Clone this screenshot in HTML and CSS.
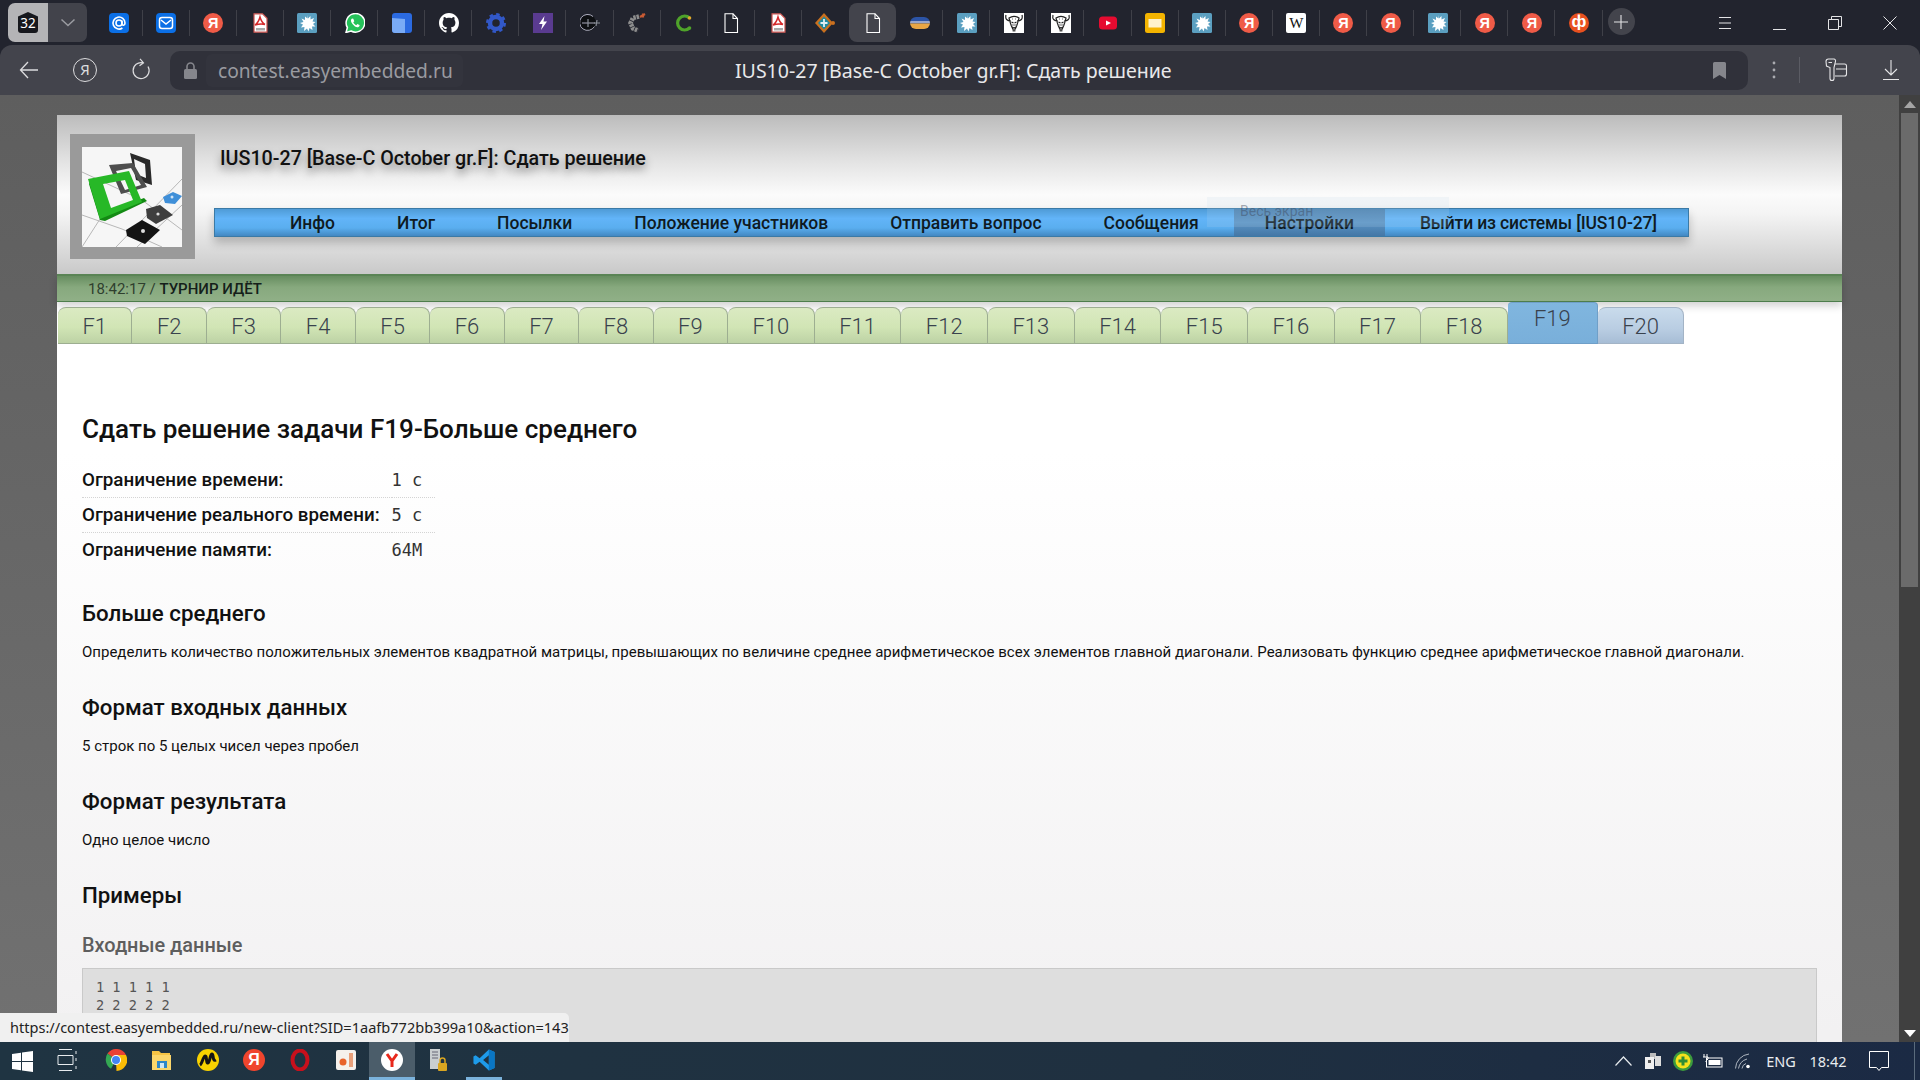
FILE: index.html
```html
<!DOCTYPE html>
<html lang="ru">
<head>
<meta charset="utf-8">
<title>IUS10-27 [Base-C October gr.F]: Сдать решение</title>
<link rel="stylesheet" href="styles.css">
</head>
<body>
<svg class="defs" aria-hidden="true">
  <defs>
    <clipPath id="oval"><rect x="0" y="4" width="20" height="12" rx="6"/></clipPath>
  </defs>
  <symbol id="i-at" viewBox="0 0 20 20"><rect width="20" height="20" rx="4" fill="#0b6fe6"/><circle cx="10" cy="10" r="3" fill="none" stroke="#fff" stroke-width="1.6"/><path d="M13 7.500v3.400c0 2 3 2 3 -.9a6 6 0 1 0-2.600 5" fill="none" stroke="#fff" stroke-width="1.6"/></symbol>
  <symbol id="i-mail" viewBox="0 0 20 20"><rect width="20" height="20" rx="4" fill="#0b6fe6"/><rect x="3.500" y="4.500" width="13" height="11" rx="2.500" fill="none" stroke="#fff" stroke-width="1.500"/><path d="M5 7l5 4 5-4" fill="none" stroke="#fff" stroke-width="1.500"/></symbol>
  <symbol id="i-pdf" viewBox="0 0 20 20"><path d="M4 .8h8.500L17 5.300v13.900H4z" fill="#fff" stroke="#c8524e" stroke-width="1.200"/><path d="M10 4c-.8 3-2 6-5 8 3-1 7-1.500 10-.5-3-1.500-4-4-5-7.500z" fill="none" stroke="#d5282a" stroke-width="1.500"/><rect x="6" y="15" width="9" height="2.500" fill="#a9a9a9"/></symbol>
  <symbol id="i-splat" viewBox="0 0 20 20"><rect width="20" height="20" rx="1.500" fill="#5b9fc0"/><path d="M10 2l1 3.500 2.500-2.500 0 3.500 3.500-1.500-1.500 3.500 3 .5-2.500 2 2.500 2.500-3.500 0 .5 3.500-3-2-1 3.500-1.500-3-3 2.500.5-4-3.500 .5 2-3-3-1.500 3.500-1-2-3.500 3.500 1.500 0-3.500 2.500 2z" fill="#fff"/></symbol>
  <symbol id="i-wa" viewBox="0 0 20 20"><path d="M1 19.500l1.400-5A9.300 9.300 0 1 1 6 18z" fill="#25c25a" stroke="#fff" stroke-width="1.500"/><path d="M7 5.500c-1.500 1-1.500 3 .5 5.500s4.500 4 6 3c1-.5 1.200-1.500 1-2l-2.200-1-1 1.200c-1.300-.5-2.500-1.700-3-3l1-1-1-2.500z" fill="#fff"/></symbol>
  <symbol id="i-cube" viewBox="0 0 20 20"><path d="M3 0h14a3 3 0 0 1 3 3v14a3 3 0 0 1-3 3H3a3 3 0 0 1-3-3V3a3 3 0 0 1 3-3z" fill="#2b6ae0"/><path d="M0 5l13 1v14H3a3 3 0 0 1-3-3z" fill="#7aabf5"/></symbol>
  <symbol id="i-gh" viewBox="0 0 16 16"><path fill="#fff" d="M8 0C3.580 0 0 3.580 0 8c0 3.540 2.290 6.530 5.470 7.590.4.070.55-.17.55-.38 0-.19-.01-.82-.01-1.490-2.010.37-2.530-.49-2.690-.94-.09-.23-.48-.94-.82-1.130-.28-.15-.68-.52-.01-.53.63-.01 1.080.58 1.230.82.72 1.210 1.870.87 2.330.66.07-.52.28-.87.51-1.070-1.780-.2-3.640-.89-3.640-3.950 0-.87.31-1.590.82-2.150-.08-.2-.36-1.020.08-2.120 0 0 .67-.21 2.200.82.64-.18 1.320-.27 2-.27.68 0 1.360.09 2 .27 1.530-1.040 2.200-.82 2.200-.82.44 1.100.16 1.920.08 2.120.51.56.82 1.270.82 2.150 0 3.070-1.870 3.750-3.650 3.950.29.25.54.73.54 1.480 0 1.070-.01 1.930-.01 2.200 0 .21.15.46.55.38A8.013 8.013 0 0016 8c0-4.420-3.580-8-8-8z"/></symbol>
  <symbol id="i-gear" viewBox="0 0 20 20"><circle cx="10" cy="10" r="6" fill="none" stroke="#3258c8" stroke-width="4.500"/><circle cx="10" cy="10" r="8.800" fill="none" stroke="#3258c8" stroke-width="2.400" stroke-dasharray="3.500 3.400"/></symbol>
  <symbol id="i-bolt" viewBox="0 0 20 20"><rect width="20" height="20" fill="#5a3b90"/><path d="M11.500 3L6 11h3.500L8 17l6-8.500h-3.500z" fill="#fff"/></symbol>
  <symbol id="i-cpp" viewBox="0 0 20 20"><circle cx="8" cy="10" r="8" fill="#0d0f12"/><path d="M13 3.500a8 8 0 1 0 1.500 10M2 10h13" fill="none" stroke="#aab" stroke-width="1"/><path d="M8 6v8M14 10h6M17 7l-1 6" fill="none" stroke="#8a8f98" stroke-width="1.200"/></symbol>
  <symbol id="i-gc" viewBox="0 0 20 20"><path d="M12 3.500L6 5 3.500 10l2.500 5.500 5 2" fill="none" stroke="#8d8d8d" stroke-width="4.500" stroke-dasharray="2.500 .8"/><path d="M13 4l5-3M16 .5v4" stroke="#c85a33" stroke-width="2.200"/></symbol>
  <symbol id="i-cg" viewBox="0 0 20 20"><path d="M15.500 5A7 7 0 1 0 15.500 15" fill="none" stroke="#4fa32a" stroke-width="3.200"/><circle cx="15.500" cy="5" r="1.800" fill="#e1a92a"/><circle cx="15.500" cy="15" r="1.800" fill="#4fa32a"/></symbol>
  <symbol id="i-doc" viewBox="0 0 20 20"><path d="M4 .8h8L16.500 5.500v14H4z" fill="#23252e" stroke="#fff" stroke-width="1.100"/><path d="M12 .8v4.700h4.500" fill="none" stroke="#fff" stroke-width="1.100"/></symbol>
  <symbol id="i-doca" viewBox="0 0 20 20"><path d="M4 .8h8L16.500 5.500v14H4z" fill="#43444c" stroke="#fff" stroke-width="1.100"/><path d="M12 .8v4.700h4.500" fill="none" stroke="#fff" stroke-width="1.100"/></symbol>
  <symbol id="i-dia" viewBox="0 0 20 20"><path d="M9 0l9 10-9 10-9-10z" fill="#c9701f"/><path d="M9 3.500l6 6.500-6 6.500L3 10z" fill="#1f8aa0"/><path d="M9 6v8M5.500 10h7" stroke="#dfeff2" stroke-width="1.800"/><circle cx="18" cy="10" r="2" fill="#c9701f"/></symbol>
  <symbol id="i-oval" viewBox="0 0 20 20"><g clip-path="url(#oval)"><rect y="4" width="20" height="4" fill="#2c54a6"/><rect y="8" width="20" height="2.500" fill="#98a6cc"/><rect y="10.500" width="20" height="5.500" fill="#e8a645"/></g></symbol>
  <symbol id="i-gnu" viewBox="0 0 20 20"><rect width="20" height="20" fill="#fff"/><path d="M2 2c-1 4 1 6 5 6M18 2c1 4-1 6-5 6M5 5c1 4 2 9 5 13 3-4 4-9 5-13-3-2-7-2-10 0zM7.500 9l2 1M12.500 9l-2 1M8 14l2 1 2-1" fill="none" stroke="#222" stroke-width="1.200"/><path d="M8 6h1M11 6h1M7 12h6M9 16.500v2M11 16.500v2" stroke="#666" stroke-width="1"/></symbol>
  <symbol id="i-yt" viewBox="0 0 20 20"><rect x="1" y="3.500" width="18" height="13" rx="3.500" fill="#e60b30"/><path d="M8 7.500l5 2.500-5 2.500z" fill="#fff"/></symbol>
  <symbol id="i-slides" viewBox="0 0 20 20"><rect width="20" height="20" rx="2.500" fill="#f4b400"/><rect x="3.500" y="6" width="13" height="8.500" fill="#fff2cc"/></symbol>
</svg>

<header class="tabstrip">
  <div class="counter">
    <div class="counter-num"><div class="shield">32</div></div>
    <div class="counter-more"><svg width="16" height="10" viewBox="0 0 16 10"><path d="M1.500 1.500L8 7.500l6.500-6" fill="none" stroke="#9a9ba1" stroke-width="1.500"/></svg></div>
  </div>
  <div class="tabs">
    <div class="tab"><svg class="fav"><use href="#i-at"/></svg></div>
    <div class="tab"><svg class="fav"><use href="#i-mail"/></svg></div>
    <div class="tab"><span class="fav-ya">Я</span></div>
    <div class="tab"><svg class="fav"><use href="#i-pdf"/></svg></div>
    <div class="tab"><svg class="fav"><use href="#i-splat"/></svg></div>
    <div class="tab"><svg class="fav"><use href="#i-wa"/></svg></div>
    <div class="tab"><svg class="fav"><use href="#i-cube"/></svg></div>
    <div class="tab"><svg class="fav"><use href="#i-gh"/></svg></div>
    <div class="tab"><svg class="fav"><use href="#i-gear"/></svg></div>
    <div class="tab"><svg class="fav"><use href="#i-bolt"/></svg></div>
    <div class="tab"><svg class="fav"><use href="#i-cpp"/></svg></div>
    <div class="tab"><svg class="fav"><use href="#i-gc"/></svg></div>
    <div class="tab"><svg class="fav"><use href="#i-cg"/></svg></div>
    <div class="tab"><svg class="fav"><use href="#i-doc"/></svg></div>
    <div class="tab"><svg class="fav"><use href="#i-pdf"/></svg></div>
    <div class="tab nosep"><svg class="fav"><use href="#i-dia"/></svg></div>
    <div class="tab active"><svg class="fav"><use href="#i-doca"/></svg></div>
    <div class="tab"><svg class="fav"><use href="#i-oval"/></svg></div>
    <div class="tab"><svg class="fav"><use href="#i-splat"/></svg></div>
    <div class="tab"><svg class="fav"><use href="#i-gnu"/></svg></div>
    <div class="tab"><svg class="fav"><use href="#i-gnu"/></svg></div>
    <div class="tab"><svg class="fav"><use href="#i-yt"/></svg></div>
    <div class="tab"><svg class="fav"><use href="#i-slides"/></svg></div>
    <div class="tab"><svg class="fav"><use href="#i-splat"/></svg></div>
    <div class="tab"><span class="fav-ya">Я</span></div>
    <div class="tab"><span class="fav-w">W</span></div>
    <div class="tab"><span class="fav-ya">Я</span></div>
    <div class="tab"><span class="fav-ya">Я</span></div>
    <div class="tab"><svg class="fav"><use href="#i-splat"/></svg></div>
    <div class="tab"><span class="fav-ya">Я</span></div>
    <div class="tab"><span class="fav-ya">Я</span></div>
    <div class="tab"><span class="fav-f">ф</span></div>
  </div>
  <div class="newtab"><svg width="14" height="14" viewBox="0 0 14 14"><path d="M7 0v14M0 7h14" stroke="#e4e4e6" stroke-width="1.100"/></svg></div>
  <div class="wincontrols">
    <div class="winbtn"><svg width="14" height="14" viewBox="0 0 14 14"><path d="M1 1.500h12M1 7h12M1 12.500h12" stroke="#e4e4e6" stroke-width="1"/></svg></div>
    <div class="winbtn"><svg width="14" height="14" viewBox="0 0 14 14"><path d="M0 13.500h13" stroke="#e4e4e6" stroke-width="1"/></svg></div>
    <div class="winbtn"><svg width="14" height="14" viewBox="0 0 14 14"><path d="M3.500 3.500V.5h10v10h-3M.5 3.500h10v10H.5z" fill="none" stroke="#e4e4e6" stroke-width="1"/></svg></div>
    <div class="winbtn"><svg width="14" height="14" viewBox="0 0 14 14"><path d="M.5.500l13 13M13.500.5l-13 13" stroke="#e4e4e6" stroke-width="1"/></svg></div>
  </div>
</header>

<nav class="toolbar">
  <div class="tool"><svg width="20" height="18" viewBox="0 0 20 18"><path d="M19 9H1.500M9 1L1.500 9 9 17" fill="none" stroke="#dcdcde" stroke-width="1.300"/></svg></div>
  <div class="tool"><span class="ya-round">Я</span></div>
  <div class="tool"><svg width="20" height="24" viewBox="0 0 20 24"><path d="M12 4.800A8 8 0 1 0 17 8.500M9 .8l3.500 4-4 3" fill="none" stroke="#dcdcde" stroke-width="1.200"/></svg></div>
  <div class="urlbar">
    <div class="lock"><svg width="13" height="17" viewBox="0 0 13 17"><path d="M3 7V4.500a3.500 3.500 0 0 1 7 0V7" fill="none" stroke="#85868c" stroke-width="1.600"/><rect y="7" width="13" height="10" rx="1.500" fill="#85868c"/></svg></div>
    <div class="domain">contest.easyembedded.ru</div>
    <div class="pagetitle">IUS10-27 [Base-C October gr.F]: Сдать решение</div>
    <div class="bookmark"><svg width="13" height="17" viewBox="0 0 13 17"><path d="M0 1.500A1.500 1.500 0 0 1 1.500 0h10A1.500 1.500 0 0 1 13 1.500V17l-6.500-4L0 17z" fill="#85868c"/></svg></div>
  </div>
  <div class="toolright">
    <div class="dots"><svg width="4" height="18" viewBox="0 0 4 18"><circle cx="2" cy="2" r="1.400" fill="#aaabb0"/><circle cx="2" cy="9" r="1.400" fill="#aaabb0"/><circle cx="2" cy="16" r="1.400" fill="#aaabb0"/></svg></div>
    <div class="toolsep"></div>
    <div class="tool wide first"><svg width="24" height="24" viewBox="0 0 24 24"><path d="M2 3.500C2 2 3 1 4.500 1H10c1 0 1.800 1 1.500 2.500l-1.500 6v11c0 1-1 2-2 2s-2-1-2-2v-11L2.500 8z" fill="none" stroke="#e6e6e8" stroke-width="1.100"/><path d="M11 6h9.500a2 2 0 0 1 2 2v8a2 2 0 0 1-2 2H11M12 11h10M4.500 4.500h3.500" fill="none" stroke="#e6e6e8" stroke-width="1.100"/></svg></div>
    <div class="tool wide"><svg width="16" height="20" viewBox="0 0 16 20"><path d="M8 0v15M2 9l6 6 6-6M0 19.500h16" fill="none" stroke="#e6e6e8" stroke-width="1.100"/></svg></div>
  </div>
</nav>

<main class="viewport">
  <div class="gutter">
    <article class="page">
      <section class="sitehead">
        <div class="logo">
          <svg class="logo-img" viewBox="0 0 100 100">
            <rect width="100" height="100" fill="#f6f6f6"/>
            <path d="M0 25l60 28 40 30M100 32L34 100M0 68l40 14 40 18M55 100L100 58M18 72L0 100" fill="none" stroke="#b7b7b7" stroke-width="1"/>
            <path d="M48 6l20 7 2 25-16-5z M52 12l2 15 10 4-1-14z" fill="#2a2a2a" fill-rule="evenodd"/>
            <path d="M27 18l24-2 14 24-26 7z M34 24l9 19 16-5-10-17z" fill="#4e4e4e" fill-rule="evenodd"/>
            <path d="M7 37l11 36 5 1 42-20-3-3-37 14-16-33z" fill="#138a13"/>
            <path d="M6 32l41-8 13 31-42 17z M21 37l8 24 22-8-8-20z" fill="#27b827" fill-rule="evenodd"/>
            <path d="M81 50l10-5 9 4-7 8-10-1z" fill="#3f8fd8"/>
            <circle cx="90" cy="50" r="1.500" fill="#cfe3f5"/>
            <path d="M64 62l14-4 13 10-17 9-9-6z" fill="#3e3e3e"/>
            <circle cx="76" cy="67" r="1.600" fill="#ddd"/>
            <path d="M44 83l16-10 18 10-15 14-18-8z" fill="#141414"/>
            <circle cx="61" cy="84" r="2" fill="#ddd"/>
          </svg>
        </div>
        <div class="headmain">
          <div class="sitetitle">IUS10-27 [Base-C October gr.F]: Сдать решение</div>
          <div class="menu">
            <a class="menuitem">Инфо</a>
            <a class="menuitem">Итог</a>
            <a class="menuitem">Посылки</a>
            <a class="menuitem">Положение участников</a>
            <a class="menuitem">Отправить вопрос</a>
            <a class="menuitem">Сообщения</a>
            <a class="menuitem current">Настройки</a>
            <a class="menuitem logout">Выйти из системы [IUS10-27]</a>
          </div>
        </div>
        <div class="ghost">Весь экран</div>
      </section>
      <div class="statusbar">18:42:17 / <b>ТУРНИР ИДЁТ</b></div>
      <div class="probtabs">
        <a class="ptab">F1</a><a class="ptab">F2</a><a class="ptab">F3</a><a class="ptab">F4</a><a class="ptab">F5</a><a class="ptab">F6</a><a class="ptab">F7</a><a class="ptab">F8</a><a class="ptab">F9</a><a class="ptab">F10</a><a class="ptab">F11</a><a class="ptab">F12</a><a class="ptab">F13</a><a class="ptab">F14</a><a class="ptab">F15</a><a class="ptab">F16</a><a class="ptab">F17</a><a class="ptab">F18</a><a class="ptab cur">F19</a><a class="ptab next">F20</a>
      </div>
      <div class="content">
        <h1>Сдать решение задачи F19-Больше среднего</h1>
        <table class="limits">
          <tr><th>Ограничение времени:</th><td>1 с</td></tr>
          <tr><th>Ограничение реального времени:</th><td>5 с</td></tr>
          <tr><th>Ограничение памяти:</th><td>64M</td></tr>
        </table>
        <h3>Больше среднего</h3>
        <p>Определить количество положительных элементов квадратной матрицы, превышающих по величине среднее арифметическое всех элементов главной диагонали. Реализовать функцию среднее арифметическое главной диагонали.</p>
        <h3>Формат входных данных</h3>
        <p>5 строк по 5 целых чисел через пробел</p>
        <h3>Формат результата</h3>
        <p>Одно целое число</p>
        <h3>Примеры</h3>
        <h4>Входные данные</h4>
        <pre class="sample">1 1 1 1 1
2 2 2 2 2
3 3 3 3 3
4 4 4 4 4
5 5 5 5 5</pre>
      </div>
    </article>
  </div>
  <div class="scrollbar">
    <div class="sb-btn"><svg width="12" height="7" viewBox="0 0 12 7"><path d="M6 0l6 7H0z" fill="#a5a5a5"/></svg></div>
    <div class="sb-track"><div class="sb-thumb"></div></div>
    <div class="sb-btn"><svg width="12" height="7" viewBox="0 0 12 7"><path d="M6 7L0 0h12z" fill="#fff"/></svg></div>
  </div>
  <div class="linkstatus">https://contest.easyembedded.ru/new-client?SID=1aafb772bb399a10&amp;action=143</div>
</main>

<footer class="taskbar">
  <div class="tb-start"><svg width="21" height="21" viewBox="0 0 21 21"><path d="M0 3l9-1.300V10H0zM10 1.500L21 0v10H10zM0 11h9v8.300L0 18zM10 11h11v10l-11-1.500z" fill="#fff"/></svg></div>
  <div class="tb-item tb-view"><svg width="21" height="22" viewBox="0 0 21 22"><path d="M2 .5h13M2 21.500h13M1 6.500h15v9H1zM19 2v3M19 9v3M19 17v3" fill="none" stroke="#e8ecef" stroke-width="1"/></svg></div>
  <div class="tb-item"><svg width="22" height="22" viewBox="0 0 22 22"><path d="M11 11L2.500 4.500A10.800 10.800 0 0 1 21 6H11z" fill="#e94235"/><path d="M11 11l-5 8.800A11 11 0 0 1 2.500 4.500z" fill="#34a853"/><path d="M11 6h10a11 11 0 0 1-9.500 16L11 11z" fill="#fbbc05"/><circle cx="11" cy="11" r="5" fill="#fff"/><circle cx="11" cy="11" r="4" fill="#4285f4"/></svg></div>
  <div class="tb-item"><svg width="20" height="20" viewBox="0 0 20 20"><path d="M0 1h7l2 2h9v4H0z" fill="#f6c445"/><path d="M0 5h19v15H0z" fill="#fbd66b"/><path d="M5 11h10v7H5z" fill="#2f87c9"/><path d="M8 13h4v5H8z" fill="#cfe6f6"/></svg></div>
  <div class="tb-item"><svg width="22" height="22" viewBox="0 0 22 22"><circle cx="11" cy="11" r="11" fill="#f8d200"/><path d="M3 16c2-1 3-8 5-9s1 8 3 7 2-9 4-9 0 8 4 6" fill="none" stroke="#151515" stroke-width="3"/></svg></div>
  <div class="tb-item"><span class="fav-ya large">Я</span></div>
  <div class="tb-item"><svg width="22" height="22" viewBox="0 0 22 22"><ellipse cx="11" cy="11" rx="7.500" ry="9.500" fill="none" stroke="#c8101c" stroke-width="4"/></svg></div>
  <div class="tb-item"><svg width="20" height="20" viewBox="0 0 20 20"><rect width="20" height="20" rx="2" fill="#f5f1ec"/><circle cx="7" cy="12" r="3.500" fill="#e8632a"/><rect x="13" y="3" width="4" height="14" fill="#e9a07a"/></svg></div>
  <div class="tb-item tb-active"><svg width="22" height="22" viewBox="0 0 22 22"><circle cx="11" cy="11" r="11" fill="#fff"/><path d="M6 5l5 7 5-7M11 12v6" fill="none" stroke="#e8281c" stroke-width="3"/></svg></div>
  <div class="tb-item"><svg width="20" height="24" viewBox="0 0 20 24"><rect x="2" y="1" width="10" height="20" fill="#c9ced0"/><path d="M4 4h6M4 7h6M4 10h6" stroke="#667" stroke-width="1"/><rect x="10" y="15" width="9" height="8" rx="1" fill="#d9a521"/><path d="M12 15v-2.500a2.500 2.500 0 0 1 5 0V15" fill="none" stroke="#d9a521" stroke-width="1.500"/></svg></div>
  <div class="tb-item tb-open"><svg width="22" height="24" viewBox="0 0 100 100"><path d="M72 2l26 12v72L72 98 30 58 12 72 2 66V34l10-6 18 14zM72 28L46 50l26 22z" fill="#1e9bea"/><path d="M72 2l26 12v72L72 98z" fill="#0a76c4"/></svg></div>
  <div class="tray">
    <div class="tray-i"><svg width="17" height="10" viewBox="0 0 17 10"><path d="M.5 9.500L8.500 1l8 8.500" fill="none" stroke="#e8ecef" stroke-width="1.200"/></svg></div>
    <div class="tray-i"><svg width="16" height="16" viewBox="0 0 16 16"><rect x="5" y="0" width="6" height="6" fill="#bbb"/><rect x="10" y="3" width="6" height="10" fill="#ddd"/><rect x="0" y="4" width="9" height="12" fill="#f0f0f0"/><rect x="3" y="7" width="3" height="3" fill="#555"/></svg></div>
    <div class="tray-i"><svg width="20" height="20" viewBox="0 0 20 20"><circle cx="10" cy="10" r="10" fill="#3c9b3e"/><circle cx="10" cy="10" r="7.500" fill="#f5e11c"/><path d="M10 5.500v9M5.500 10h9" stroke="#2f8c35" stroke-width="3"/></svg></div>
    <div class="tray-i"><svg width="20" height="14" viewBox="0 0 20 14"><path d="M1 0v3M4 0v3M0 3h5v2l-2 2v1" fill="none" stroke="#fff" stroke-width="1"/><rect x="3.500" y="4" width="15.500" height="9" fill="none" stroke="#fff" stroke-width="1"/><rect x="5.500" y="6" width="12" height="5" fill="#fff"/></svg></div>
    <div class="tray-i"><svg width="16" height="16" viewBox="0 0 16 16"><path d="M.5 15.500A15 15 0 0 1 14 1M3.500 15.500A12 12 0 0 1 12 6M7 15.500a6 6 0 0 1 4-5" fill="none" stroke="#aeb6c0" stroke-width="1"/><circle cx="13" cy="13.500" r="1.800" fill="#fff"/></svg></div>
    <div class="tray-t lang">ENG</div>
    <div class="tray-t clock">18:42</div>
    <div class="tray-i notif"><svg width="20" height="20" viewBox="0 0 20 20"><path d="M.5.500h19v16h-7l-2.500 3-2.500-3h-7z" fill="none" stroke="#fff" stroke-width="1"/></svg></div>
    <div class="showdesk"></div>
  </div>
</footer>
</body>
</html>
```

FILE: styles.css
```css
* { box-sizing: border-box; }
html, body { margin: 0; height: 100%; }
body {
  display: flex;
  flex-direction: column;
  width: 1920px;
  height: 1080px;
  overflow: hidden;
  background: #22242e;
  font-family: Roboto, "Liberation Sans", sans-serif;
}
.defs { display: block; width: 0; height: 0; flex: none; overflow: hidden; }

/* browser tab strip */
.tabstrip {
  flex: none;
  display: flex;
  align-items: flex-start;
  height: 45px;
  padding: 3px 0 0 8px;
  background: #22242e;
}
.counter { display: flex; width: 79px; height: 39px; border-radius: 7px; overflow: hidden; }
.counter-num { width: 40px; display: flex; align-items: center; justify-content: center; background: #b4b4b6; }
.shield {
  width: 20px;
  height: 21px;
  padding-top: 2px;
  line-height: 19px;
  text-align: center;
  font-family: "Noto Sans", sans-serif;
  font-size: 13.500px;
  color: #fff;
  background: #17181d;
  border-radius: 3px;
  clip-path: polygon(50% 0, 100% 22%, 100% 100%, 0 100%, 0 22%);
}
.counter-more { flex: 1; display: flex; align-items: center; justify-content: center; background: #42434b; }
.tabs { display: flex; margin-left: 8.500px; }
.tab {
  width: 47.100px;
  height: 39px;
  display: flex;
  align-items: center;
  justify-content: center;
  background: linear-gradient(#3f4048, #3f4048) right center / 1px 26px no-repeat;
}
.tab.nosep { background: none; }
.tab.active { background: #43444c; border-radius: 8px; }
.fav { width: 20px; height: 20px; }
.fav-ya, .fav-f, .fav-w {
  width: 20px;
  height: 20px;
  display: block;
  text-align: center;
  line-height: 20px;
  font-family: "Liberation Sans", sans-serif;
  font-weight: 700;
  color: #fff;
}
.fav-ya { border-radius: 50%; background: #ef5b47; font-size: 14.500px; }
.fav-ya.large { width: 22px; height: 22px; line-height: 22px; font-size: 16px; background: #f0452d; }
.fav-f { border-radius: 50%; background: #e8501f; font-size: 17px; line-height: 18px; }
.fav-w { border-radius: 2px; background: #fff; color: #111; font-family: "Liberation Serif", serif; font-weight: 400; font-size: 15px; }
.newtab {
  width: 27px;
  height: 27px;
  margin: 5px 0 0 5px;
  display: flex;
  align-items: center;
  justify-content: center;
  border-radius: 50%;
  background: #43444c;
}
.wincontrols { display: flex; margin: 6px 0 0 auto; padding-right: 2.500px; }
.winbtn { width: 55px; height: 27px; display: flex; align-items: center; justify-content: center; }

/* browser toolbar */
.toolbar {
  flex: none;
  display: flex;
  align-items: center;
  height: 50px;
  padding-left: 1px;
  background: #43444c;
  border-radius: 12px 12px 0 0;
}
.tool { width: 56px; height: 40px; display: flex; align-items: center; justify-content: center; }
.tool.wide { width: 55px; }
.tool.first { margin-left: 8px; }
.ya-round {
  width: 24px;
  height: 24px;
  border: 1.200px solid #dcdcde;
  border-radius: 50%;
  text-align: center;
  line-height: 21px;
  font-family: "Noto Sans", sans-serif;
  font-size: 15px;
  color: #dcdcde;
}
.urlbar {
  width: 1578px;
  height: 39px;
  margin-left: 1px;
  display: flex;
  align-items: center;
  border-radius: 10px;
  background: #30313a;
  color: #9a9ba1;
  font-family: "Noto Sans", sans-serif;
}
.lock { width: 36px; padding-left: 14px; display: flex; }
.domain { width: 257px; height: 33px; padding-left: 12px; line-height: 33px; font-size: 19.200px; border-radius: 6px; background: #33343d; white-space: nowrap; }
.pagetitle { margin-left: 272px; color: #e8e8ea; font-size: 19.550px; white-space: nowrap; }
.bookmark { margin-left: auto; padding-right: 22px; display: flex; }
.toolright { display: flex; align-items: center; margin-left: 24px; }
.dots { display: flex; }
.toolsep { width: 1px; height: 26px; margin-left: 23px; background: #5b5c64; }

/* viewport */
.viewport {
  position: relative;
  flex: 1;
  min-height: 0;
  display: flex;
  overflow: hidden;
}
.gutter {
  flex: 1;
  min-width: 0;
  padding: 20px 57px 0 57px;
  background: linear-gradient(#5e5e5e, #717171);
  overflow: hidden;
}
.page {
  width: 1785px;
  min-height: 100%;
  background: linear-gradient(#fff 35%, #f2f1f2 95%);
}
.sitehead {
  position: relative;
  display: flex;
  height: 159px;
  background: linear-gradient(#bcbcbc 0, #e4e4e4 30%, #fbfbfb 50%, #f4f4f4 62%, #c9c9c9 100%);
}
.logo { width: 125px; height: 125px; margin: 19px 0 0 13px; padding: 13px 13px 12px 12px; background: #9a9a9a; }
.logo-img { display: block; width: 100px; height: 100px; }
.headmain { margin-left: 19px; }
.sitetitle {
  margin: 32px 0 37px 6px;
  height: 24px;
  line-height: 24px;
  font-size: 19.700px;
  font-weight: 500;
  color: #111;
  text-shadow: 0 5px 8px rgba(0,0,0,.45);
  white-space: nowrap;
}
.menu {
  display: flex;
  width: 1475px;
  height: 29px;
  padding-left: 44px;
  border: 1px solid #3b7aa6;
  background: linear-gradient(#4f9bd6, #62b4f8 35%, #5aaeef 70%, #4388c2);
  box-shadow: 0 6px 10px rgba(0,0,0,.22);
}
.menuitem {
  padding: 0 31px;
  line-height: 29px;
  font-size: 17.500px;
  color: #0f1a22;
  font-weight: 500;
  white-space: nowrap;
}
.menuitem.current { margin-left: 4px; background: linear-gradient(#4a7fae, #5a93c4 50%, #4477a6); }
.menuitem.logout { margin-left: 4px; letter-spacing: -.15px; }
.ghost {
  position: absolute;
  left: 1150px;
  top: 82px;
  width: 242px;
  height: 30px;
  padding: 6px 0 0 33px;
  font-size: 14px;
  color: rgba(60,70,90,.45);
  background: rgba(190,215,235,.16);
}
.statusbar {
  height: 28px;
  padding-left: 31px;
  line-height: 27px;
  font-size: 15px;
  color: #2f3f2e;
  border-top: 2px solid #5a8455;
  border-bottom: 1px solid #4d7d4c;
  background: linear-gradient(#678d60, #87a97e 45%, #90b087);
  box-shadow: 0 4px 8px rgba(0,0,0,.18);
}
.statusbar b { font-weight: 500; color: #14201a; }
.probtabs { display: flex; align-items: flex-end; height: 42px; padding-left: 1px; }
.ptab {
  height: 37px;
  padding: 0 24.450px;
  line-height: 38px;
  font-size: 22px;
  font-weight: 300;
  color: #39424d;
  border: 1px solid #9dae91;
  border-left: 0;
  border-radius: 8px 8px 0 0;
  background: linear-gradient(#dbeac2, #d1e5b5 55%, #bdd2a5);
}
.ptab.cur {
  height: 42px;
  line-height: 32px;
  padding: 0 26px;
  border-color: #6f9fc8;
  border-radius: 4px 4px 0 0;
  background: linear-gradient(#80b6df, #79afda);
}
.ptab.next {
  border-color: #a3b4c6;
  background: linear-gradient(#c9dbec, #b9cde2 60%, #a7bdd5);
}
.content { padding: 0 25px; color: #000; }
h1 { margin: 69.500px 0 0; font-size: 26.050px; line-height: 30px; font-weight: 500; color: #111; }
.limits { margin: 19px 0 2px; border-collapse: collapse; }
.limits tr { height: 35px; border-bottom: 1px dotted #d4d4d4; }
.limits tr:last-child { border-bottom: 0; }
.limits th { padding: 0 12px 0 0; text-align: left; font-size: 18.800px; font-weight: 500; color: #111; white-space: nowrap; }
.limits td { padding: 0 13px 0 0; font-family: "DejaVu Sans Mono", monospace; font-size: 17px; color: #333; white-space: pre; }
h3 { margin: 32.500px 0 0; font-size: 22.300px; line-height: 26px; font-weight: 500; color: #111; }
p { margin: 15.600px 0 0; font-size: 15px; line-height: 20px; color: #111; }
h4 { margin: 26px 0 0; font-size: 19.900px; line-height: 24px; font-weight: 500; color: #5e5e5e; }
.sample {
  margin: 9.500px 0 0;
  width: 1735px;
  padding: 9px 13px;
  font-family: "DejaVu Sans Mono", monospace;
  font-size: 13.600px;
  line-height: 18px;
  color: #555;
  background: #dedede;
  border: 1px solid #c9c9c9;
}

/* scrollbar */
.scrollbar { flex: none; width: 21px; display: flex; flex-direction: column; background: #404040; }
.sb-btn { height: 18px; display: flex; align-items: center; justify-content: center; }
.sb-track { flex: 1; padding: 0 2px; }
.sb-thumb { height: 474px; background: #6b6b6b; }

.linkstatus {
  position: absolute;
  left: 0;
  bottom: 0;
  height: 29px;
  width: 569px;
  padding-left: 10px;
  line-height: 28px;
  font-family: "Noto Sans", sans-serif;
  font-size: 14.550px;
  color: #222;
  background: #f0f0f0;
  border-radius: 0 5px 0 0;
  white-space: nowrap;
}

/* taskbar */
.taskbar {
  flex: none;
  display: flex;
  align-items: stretch;
  height: 38px;
  background: linear-gradient(90deg, #1f3442, #1f3040 60%, #1b2a44);
  color: #e8ecef;
  font-family: "Noto Sans", sans-serif;
}
.tb-start { width: 44px; display: flex; align-items: center; justify-content: center; }
.tb-item { width: 46px; display: flex; align-items: center; justify-content: center; border-bottom: 3px solid transparent; }
.tb-view { margin-right: 3px; }
.tb-active { background: #4b5d6a; border-bottom-color: #7bb3dc; }
.tb-open { border-bottom-color: #7bb3dc; margin: 0 5px; width: 36px; }
.tray { margin-left: auto; display: flex; align-items: center; }
.tray-i { width: 30px; display: flex; align-items: center; justify-content: center; }
.tray-t { font-size: 14.500px; white-space: nowrap; text-align: center; }
.lang { margin-left: 3px; width: 40px; }
.clock { margin-left: 2px; width: 50px; }
.notif { width: 40px; margin-left: 6px; }
.showdesk { width: 1px; height: 100%; margin-left: 15px; margin-right: 5px; background: #5a6b7c; }
```
